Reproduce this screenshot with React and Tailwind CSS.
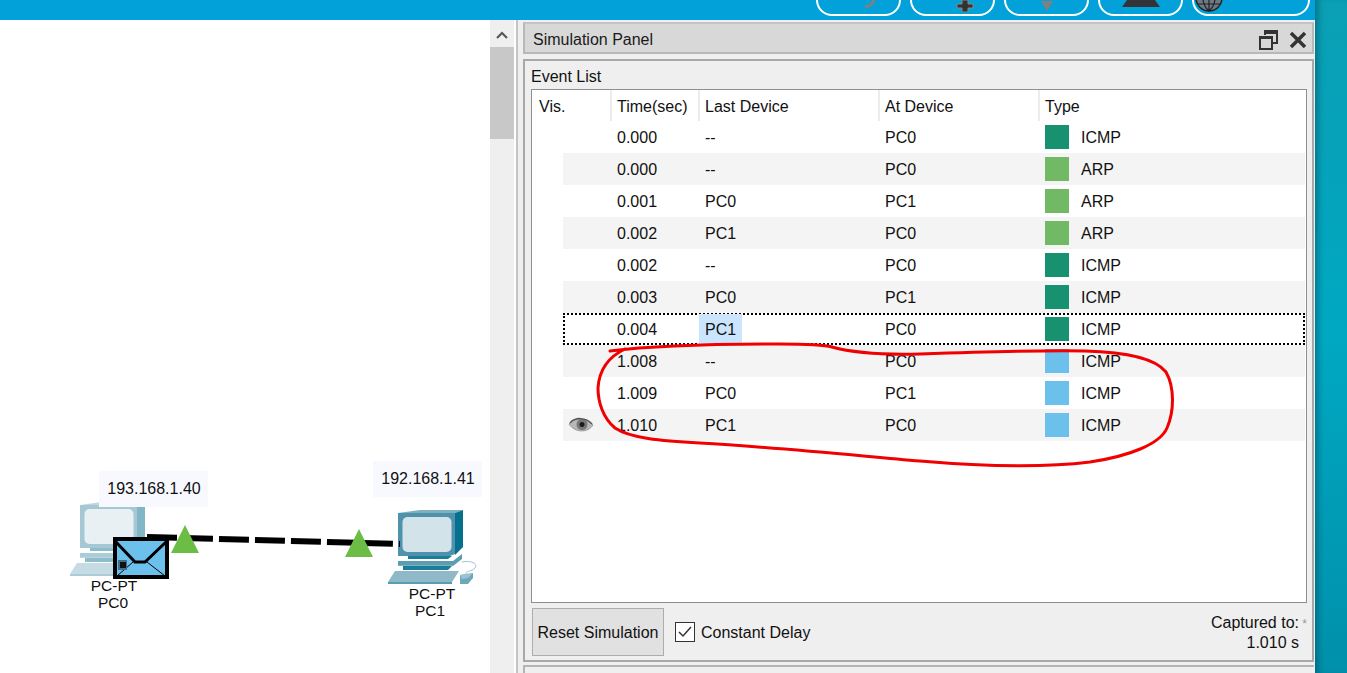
import React from 'react';

const ICMP_GREEN = 'bg-[#17916f]';
const ARP_GREEN = 'bg-[#72b966]';
const ICMP_BLUE = 'bg-[#6cc0ec]';

const events = [
    { time: '0.000', last: '--', at: 'PC0', type: 'ICMP', color: ICMP_GREEN },
    { time: '0.000', last: '--', at: 'PC0', type: 'ARP', color: ARP_GREEN },
    { time: '0.001', last: 'PC0', at: 'PC1', type: 'ARP', color: ARP_GREEN },
    { time: '0.002', last: 'PC1', at: 'PC0', type: 'ARP', color: ARP_GREEN },
    { time: '0.002', last: '--', at: 'PC0', type: 'ICMP', color: ICMP_GREEN },
    { time: '0.003', last: 'PC0', at: 'PC1', type: 'ICMP', color: ICMP_GREEN },
    { time: '0.004', last: 'PC1', at: 'PC0', type: 'ICMP', color: ICMP_GREEN, selected: true },
    { time: '1.008', last: '--', at: 'PC0', type: 'ICMP', color: ICMP_BLUE },
    { time: '1.009', last: 'PC0', at: 'PC1', type: 'ICMP', color: ICMP_BLUE },
    { time: '1.010', last: 'PC1', at: 'PC0', type: 'ICMP', color: ICMP_BLUE, visible: true },
];

function PcIcon({ className }) {
    return (
        <svg width="90" height="76" viewBox="0 0 90 76" className={className}>
            <polygon points="10,3 32,0 75,0 67,3" fill="#7fb0c0" />
            <polygon points="10,3 67,3 67,44 62,46 10,46" fill="#4e93ab" />
            <polygon points="67,3 75,0 75,37 67,45" fill="#06708f" />
            <rect x="14.5" y="7" width="49" height="35" rx="5" fill="#d3e3ea" />
            <polygon points="20,46 64,46 60,49 20,49" fill="#1a7d99" />
            <polygon points="10,51 65,51 74,44 74,49 65,56 10,56" fill="#5c9db2" />
            <rect x="10" y="55" width="55" height="1" fill="#7fb0c0" />
            <polygon points="15,56 64,56 60,60 15,60" fill="#1a7d99" />
            <polygon points="7,61 71,61 64,72 0,72" fill="#8fb9c8" />
            <rect x="0" y="72" width="64" height="2" fill="#5b9cb3" />
            <path d="M74 52 C84 50 90 54 87 58 C84 62 76 60 78 66" fill="none" stroke="#9cc3d1" strokeWidth="1" />
            <polygon points="72,65 85,63 85,68 80,74 72,74" fill="#6ea7ba" />
            <polygon points="72,65 85,63 80,68 74,69" fill="#9cc3d1" />
        </svg>
    );
}

function Envelope() {
    return (
        <svg width="56" height="42" viewBox="0 0 56 42" className="absolute left-[113px] top-[517px]">
            <rect x="2" y="2" width="52" height="38" fill="#6cc0ec" stroke="#000" strokeWidth="4" />
            <path d="M3 5 L22 25 H32 L53 5" fill="none" stroke="#000" strokeWidth="3" />
            <path d="M20 25 L4 39 M34 25 L52 39" fill="none" stroke="#000" strokeWidth="1" />
            <rect x="5" y="23" width="9" height="10" fill="#3f6f8c" />
            <rect x="7" y="25" width="6" height="6" fill="#111" />
        </svg>
    );
}

function Canvas() {
    return (
        <div className="relative w-[490px] bg-white shrink-0">
            <PcIcon className="absolute left-[70px] top-[482px] opacity-50" />
            <PcIcon className="absolute left-[388px] top-[490px]" />
            <div className="absolute left-[99px] top-[451px] w-[109px] h-[36px] bg-[#f8f9ff] flex items-center justify-center pl-[1px]">193.168.1.40</div>
            <div className="absolute left-[373px] top-[441px] w-[109px] h-[36px] bg-[#f8f9ff] flex items-center justify-center pl-[1px]">192.168.1.41</div>
            <svg width="490" height="653" className="absolute left-0 top-0">
                <line x1="147" y1="517" x2="400" y2="524" stroke="#000" strokeWidth="6" strokeDasharray="30 6" />
                <polygon points="171,533 185,505 199,533" fill="#6cbd45" />
                <polygon points="345,537 359,509 373,537" fill="#6cbd45" />
            </svg>
            <Envelope />
            <div className="absolute left-[64px] top-[557px] w-[100px] text-center text-[15.5px] leading-[17px]">PC-PT<br /><span className="mr-[2px]">PC0</span></div>
            <div className="absolute left-[382px] top-[565px] w-[100px] text-center text-[15.5px] leading-[17px]">PC-PT<br /><span className="mr-[4px]">PC1</span></div>
        </div>
    );
}

function Scrollbar() {
    return (
        <div className="w-[24px] shrink-0 bg-[#efefef] flex flex-col">
            <div className="h-[27px] flex items-center justify-center pt-[2px]">
                <svg width="12" height="8" viewBox="0 0 12 8">
                    <path d="M1 7 L6 2 L11 7" fill="none" stroke="#555" strokeWidth="2" />
                </svg>
            </div>
            <div className="h-[92px] bg-[#c8c8c8]"></div>
        </div>
    );
}

function Eye() {
    return (
        <svg width="26" height="18" viewBox="0 0 26 18">
            <path d="M1 8 C6 2 18 1 25 9 C20 17 7 17 1 8 Z" fill="#b8b8b8" stroke="#9a9a9a" strokeWidth="1" />
            <circle cx="14" cy="8.5" r="5.5" fill="#777" />
            <circle cx="14" cy="8.5" r="2.5" fill="#1c1c1c" />
            <path d="M2 7 C7 1 18 1 24 8" fill="none" stroke="#555" strokeWidth="1.5" />
        </svg>
    );
}

function EventRow({ event, index }) {
    const striped = index % 2 === 1;
    return (
        <div className="relative flex h-[32px] ml-[31px] mr-[1px] items-center">
            <div className={`absolute inset-0 ${striped ? 'bg-[#f4f4f4]' : 'bg-white'} ${event.selected ? 'border-2 border-dotted border-black bg-white' : ''}`}></div>
            <div className="relative w-[48px] flex justify-start pl-[5px]">{event.visible && <Eye />}</div>
            <div className="relative w-[88px] pl-[6px] pt-[1px]">{event.time}</div>
            <div className="relative w-[180px] h-full pl-[6px] flex items-center">
                {event.selected
                    ? <span className="bg-[#cce5ff] -ml-[6px] px-[6px] h-[30px] pt-[1px] flex items-center">{event.last}</span>
                    : <span className="pt-[1px]">{event.last}</span>}
            </div>
            <div className="relative w-[160px] pl-[6px] pt-[1px]">{event.at}</div>
            <div className="relative flex items-center pl-[6px]">
                <div className={`w-[24px] h-[24px] ${event.color}`}></div>
                <span className="ml-[12px] pt-[1px]">{event.type}</span>
            </div>
        </div>
    );
}

function HeaderCell({ width, children, border = true }) {
    return (
        <div className={`${width} h-full flex items-center pl-[5px] pt-[2px] ${border ? 'border-r-2 border-[#ececec]' : ''}`}>
            {children}
        </div>
    );
}

function EventTable() {
    return (
        <div className="flex-1 bg-white border border-[#8f8f8f] mr-[5px]">
            <div className="flex h-[31px]">
                <div className="w-[80px] h-full flex items-center pl-[7px] pt-[2px] border-r-2 border-[#ececec]">Vis.</div>
                <HeaderCell width="w-[88px]">Time(sec)</HeaderCell>
                <HeaderCell width="w-[180px]">Last Device</HeaderCell>
                <HeaderCell width="w-[160px]">At Device</HeaderCell>
                <HeaderCell width="w-[200px]" border={false}>Type</HeaderCell>
            </div>
            {events.map((event, i) => <EventRow key={i} event={event} index={i} />)}
        </div>
    );
}

function SimulationPanel() {
    return (
        <div className="flex-1 flex flex-col bg-[#efefef] border-l-2 border-[#c4c4c4] ml-[2px] pl-[5px] pr-[1px]">
            <div className="h-[32px] mt-[2px] bg-[#d8d8d8] border-2 border-[#b8b8b8] border-t-[#c4c4c4] flex items-center justify-between pl-[8px] pr-[5px] text-[#1a1a1a]">
                <span className="pt-[3px]">Simulation Panel</span>
                <div className="flex items-center gap-[11px] pt-[3px]">
                    <svg width="19" height="20" viewBox="0 0 19 20">
                        <path d="M6 5 V1 H18 V13 H13" fill="none" stroke="#333" strokeWidth="2" />
                        <rect x="6" y="1" width="12" height="3" fill="#333" />
                        <rect x="1" y="7" width="12" height="12" fill="none" stroke="#333" strokeWidth="2" />
                        <rect x="1" y="6" width="12" height="3" fill="#333" />
                    </svg>
                    <svg width="18" height="18" viewBox="0 0 18 18">
                        <path d="M2 2 L16 16 M16 2 L2 16" fill="none" stroke="#333" strokeWidth="3.5" />
                    </svg>
                </div>
            </div>
            <div className="mt-[5px] h-[603px] border-2 border-[#a8a8a8] flex flex-col pl-[6px] pb-[4px]">
                <div className="h-[28px] flex items-center pt-[3px]">Event List</div>
                <EventTable />
                <div className="flex items-center justify-between pt-[5px] pr-[13px]">
                    <div className="flex items-center ml-[1px]">
                        <button className="w-[132px] h-[48px] bg-[#e1e1e1] border border-[#adadad] pt-[1px]">Reset Simulation</button>
                        <div className="ml-[11px] w-[20px] h-[20px] bg-white border border-[#333] flex items-center justify-center">
                            <svg width="14" height="12" viewBox="0 0 14 12">
                                <path d="M1 6 L5 10 L13 1" fill="none" stroke="#333" strokeWidth="1.5" />
                            </svg>
                        </div>
                        <span className="ml-[6px] pt-[1px]">Constant Delay</span>
                    </div>
                    <div className="relative text-right leading-[20px] pt-[1px]">
                        <div>Captured to:</div>
                        <div>1.010 s</div>
                        <span className="absolute -right-[8px] top-[6px] text-[12px] leading-[12px] text-[#999]">*</span>
                    </div>
                </div>
            </div>
            <div className="mt-[3px] flex-1 border-t-2 border-l-2 border-[#b4b4b4]"></div>
        </div>
    );
}

function Pill({ width, children, className = 'justify-center' }) {
    return (
        <div className={`${width} h-[30px] rounded-b-[16px] border-2 border-white flex items-end overflow-hidden ${className}`}>
            {children}
        </div>
    );
}

function TopBar() {
    return (
        <div className="h-[20px] shrink-0 bg-[#03a1d9] overflow-hidden flex items-end justify-end gap-[9px] pr-[5px] pb-[4px]">
            <Pill width="w-[85px]">
                <svg width="16" height="9" viewBox="0 0 16 9" className="ml-[22px] mb-[6px]">
                    <path d="M12 0 C12 4 8 7 3 8" fill="none" stroke="#808080" strokeWidth="3" />
                </svg>
            </Pill>
            <Pill width="w-[85px]">
                <svg width="18" height="12" viewBox="0 0 18 12" className="ml-[24px] mb-[2px]">
                    <path d="M6 0 H12 V4 H17 V8 H12 V12 H6 V8 H1 V4 H6 Z" fill="#333" stroke="#888" strokeWidth="1" />
                </svg>
            </Pill>
            <Pill width="w-[85px]">
                <svg width="14" height="10" viewBox="0 0 14 10" className="mb-[3px]">
                    <polygon points="1,0 13,0 7,10" fill="#808080" />
                </svg>
            </Pill>
            <Pill width="w-[85px]">
                <svg width="38" height="7" viewBox="0 0 38 7" className="mb-[7px]">
                    <polygon points="5,0 33,0 38,7 0,7" fill="#33333a" />
                </svg>
            </Pill>
            <Pill width="w-[118px]" className="justify-start pl-[1px]">
                <svg width="28" height="28" viewBox="0 0 28 28" className="mb-[2px]">
                    <circle cx="14" cy="14" r="13" fill="#6b7a85" stroke="#222" strokeWidth="1.5" />
                    <path d="M1 14 H27 M14 1 V27 M3 8 H25 M3 20 H25 M14 1 C6 8 6 20 14 27 M14 1 C22 8 22 20 14 27" fill="none" stroke="#222" strokeWidth="1.2" />
                </svg>
            </Pill>
        </div>
    );
}

function RedAnnotation() {
    return (
        <svg width="1347" height="673" className="absolute left-0 top-0 pointer-events-none">
            <path
                d="M610 351 C650 346 700 344 780 344 C805 344 825 345 832 347 C850 352 880 355 920 354 C980 352 1040 350 1085 351 C1125 352 1155 358 1166 372 C1175 388 1174 412 1167 428 C1160 444 1130 456 1090 462 C1050 467 990 467 920 461 C840 454 770 447 700 443 C660 441 630 438 615 428 C603 418 598 402 598 388 C599 372 606 358 625 349"
                fill="none"
                stroke="#f00000"
                strokeWidth="3"
                strokeLinecap="round"
            />
        </svg>
    );
}

export default function App() {
    return (
        <div className="relative w-[1347px] h-[673px] overflow-hidden flex font-['Liberation_Sans',Arial,sans-serif] text-[16px] text-[#111]">
            <div className="w-[1315px] shrink-0 flex flex-col bg-white">
                <TopBar />
                <div className="flex-1 flex min-h-0">
                    <Canvas />
                    <Scrollbar />
                    <SimulationPanel />
                </div>
            </div>
            <div className="flex-1 bg-gradient-to-b from-[#0a9fb4] via-[#00a8c2] to-[#0090ab] shadow-[inset_7px_0_6px_-4px_rgba(0,60,80,0.45)]"></div>
            <RedAnnotation />
        </div>
    );
}
